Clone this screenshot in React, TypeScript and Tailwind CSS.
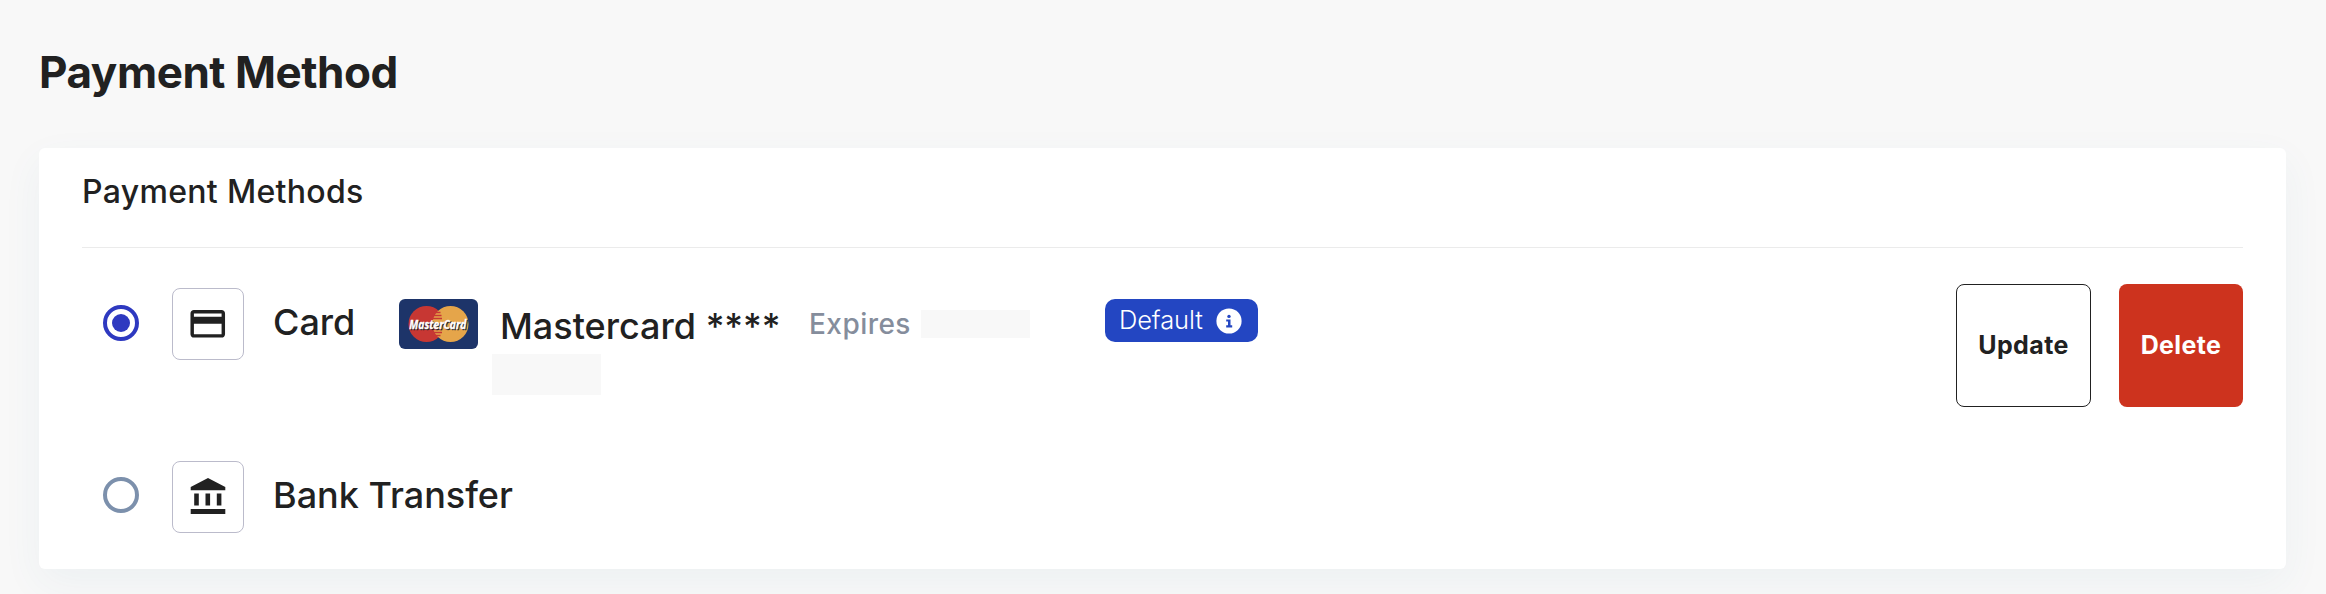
import type { ReactNode } from "react";
import { MdOutlineCreditCard } from "react-icons/md";

function Radio({ checked = false }: { checked?: boolean }) {
  return (
    <span
      className={`flex h-9 w-9 shrink-0 items-center justify-center rounded-full border-4 ${
        checked ? "border-[#2e39c0]" : "border-[#7c90ac]"
      }`}
    >
      {checked && <span className="h-[18px] w-[18px] rounded-full bg-[#2e39c0]" />}
    </span>
  );
}

function IconBox({ children }: { children: ReactNode }) {
  return (
    <span className="flex h-[72px] w-[72px] shrink-0 items-center justify-center rounded-lg border border-[#bbbbcb]">
      {children}
    </span>
  );
}

function BankIcon() {
  return (
    <svg className="mb-[2px]" width="36" height="36" viewBox="0 0 36 36" fill="#212121">
      <path d="M18 0 35.3 9v3.3H.7V9zM4.2 15.6h4.6v11.9H4.2zM15.5 15.6h4.6v11.9h-4.6zM26.8 15.6h4.6v11.9h-4.6zM.7 31h34.6v5H.7z" />
    </svg>
  );
}

function MastercardLogo() {
  return (
    <svg className="shrink-0" width="79" height="50" viewBox="0 0 79 50">
      <rect width="79" height="50" rx="6" fill="#1d3469" />
      <circle cx="27.5" cy="25" r="18" fill="#c73733" />
      <circle cx="51.5" cy="25" r="18" fill="#e5a54a" />
      <path
        d="M36.5 13.5h5M35 16.5h7.5M34 19.5h9M34 30.5h9M35 33.5h8M36.5 36.5h5"
        stroke="#c73733"
        strokeWidth="1.4"
      />
      <g
        fontFamily="Open Sans, Noto Sans, sans-serif"
        fontSize="13"
        fontWeight="700"
        fontStyle="italic"
        letterSpacing="-0.3"
        strokeWidth="0.35"
        transform="scale(0.79 1)"
      >
        <text x="14.2" y="30.8" textLength="72" fill="#1c1c28" stroke="#1c1c28">
          MasterCard
        </text>
        <text x="13" y="29.8" textLength="72" fill="#ffffff" stroke="#ffffff">
          MasterCard
        </text>
      </g>
    </svg>
  );
}

function InfoIcon() {
  return (
    <svg width="26" height="26" viewBox="0 0 26 26">
      <circle cx="13" cy="13" r="12.6" fill="#ffffff" />
      <circle cx="13" cy="8.4" r="1.7" fill="#2346c2" />
      <path d="M10.2 11.4h4.3v5.8h1.7v2.2h-6v-2.2h1.8v-3.6h-1.8z" fill="#2346c2" />
    </svg>
  );
}

export default function App() {
  return (
    <main className="h-[594px] w-full overflow-hidden bg-[#f8f8f8] px-[39px] pr-10 font-['Inter',sans-serif] text-[#212121]">
      <h1 className="pt-11 text-[44px] leading-[56px] font-bold tracking-[-0.01em] whitespace-nowrap">
        Payment Method
      </h1>

      <section className="mt-12 h-[421px] rounded-md bg-white px-[43px] shadow-[0_14px_40px_rgba(50,120,160,0.06)]">
        <h2 className="flex h-[100px] items-center border-b border-[#ebebeb] pb-[11px] text-[32px] font-medium tracking-[0.01em] whitespace-nowrap">
          Payment Methods
        </h2>

        <div className="mt-9 flex h-[123px] items-start pl-[21px]">
          <div className="mt-1 flex h-[72px] items-center">
            <span className="-mt-[3px]">
              <Radio checked />
            </span>
            <span className="ml-[33px]">
              <IconBox>
                <MdOutlineCreditCard size={41.5} color="#212121" />
              </IconBox>
            </span>
            <span className="-mt-1 ml-[29px] w-[126px] text-[36px] font-medium">Card</span>
          </div>
          <div className="mt-[15px]">
            <MastercardLogo />
          </div>
          <div className="ml-[14px] w-[310px]">
            <p className="ml-2 mt-[14px] text-[36px] leading-[56px] font-medium whitespace-nowrap">Mastercard ****</p>
            <div className="h-[41px] w-[109px] bg-[#f8f8f8]" />
          </div>
          <div className="ml-[7px] mt-[22px] flex h-9 w-[296px] items-center">
            <span className="w-[112px] text-[28px] font-medium tracking-[0.016em] text-[#858d9c]">Expires</span>
            <span className="h-7 w-[109px] bg-[#f8f8f8]" />
          </div>
          <div className="mt-[15px] flex h-[43px] w-[153px] shrink-0 items-center rounded-[10px] bg-[#2346c2] pl-[14px] text-white">
            <span className="w-[97px] text-[25.5px] font-light tracking-[-0.005em]">Default</span>
            <InfoIcon />
          </div>
          <div className="ml-auto flex gap-7 text-[25px] font-bold tracking-[0.015em]">
            <button className="h-[123px] w-[135px] rounded-lg border border-[#212121]">Update</button>
            <button className="h-[123px] w-[124px] rounded-lg bg-[#cd331e] text-white">Delete</button>
          </div>
        </div>

        <div className="mt-[54px] flex h-[72px] items-center pl-[21px]">
          <span className="-mt-1">
            <Radio />
          </span>
          <span className="ml-[33px]">
            <IconBox>
              <BankIcon />
            </IconBox>
          </span>
          <span className="-mt-1 ml-[29px] text-[36px] font-medium whitespace-nowrap">Bank Transfer</span>
        </div>
      </section>
    </main>
  );
}
